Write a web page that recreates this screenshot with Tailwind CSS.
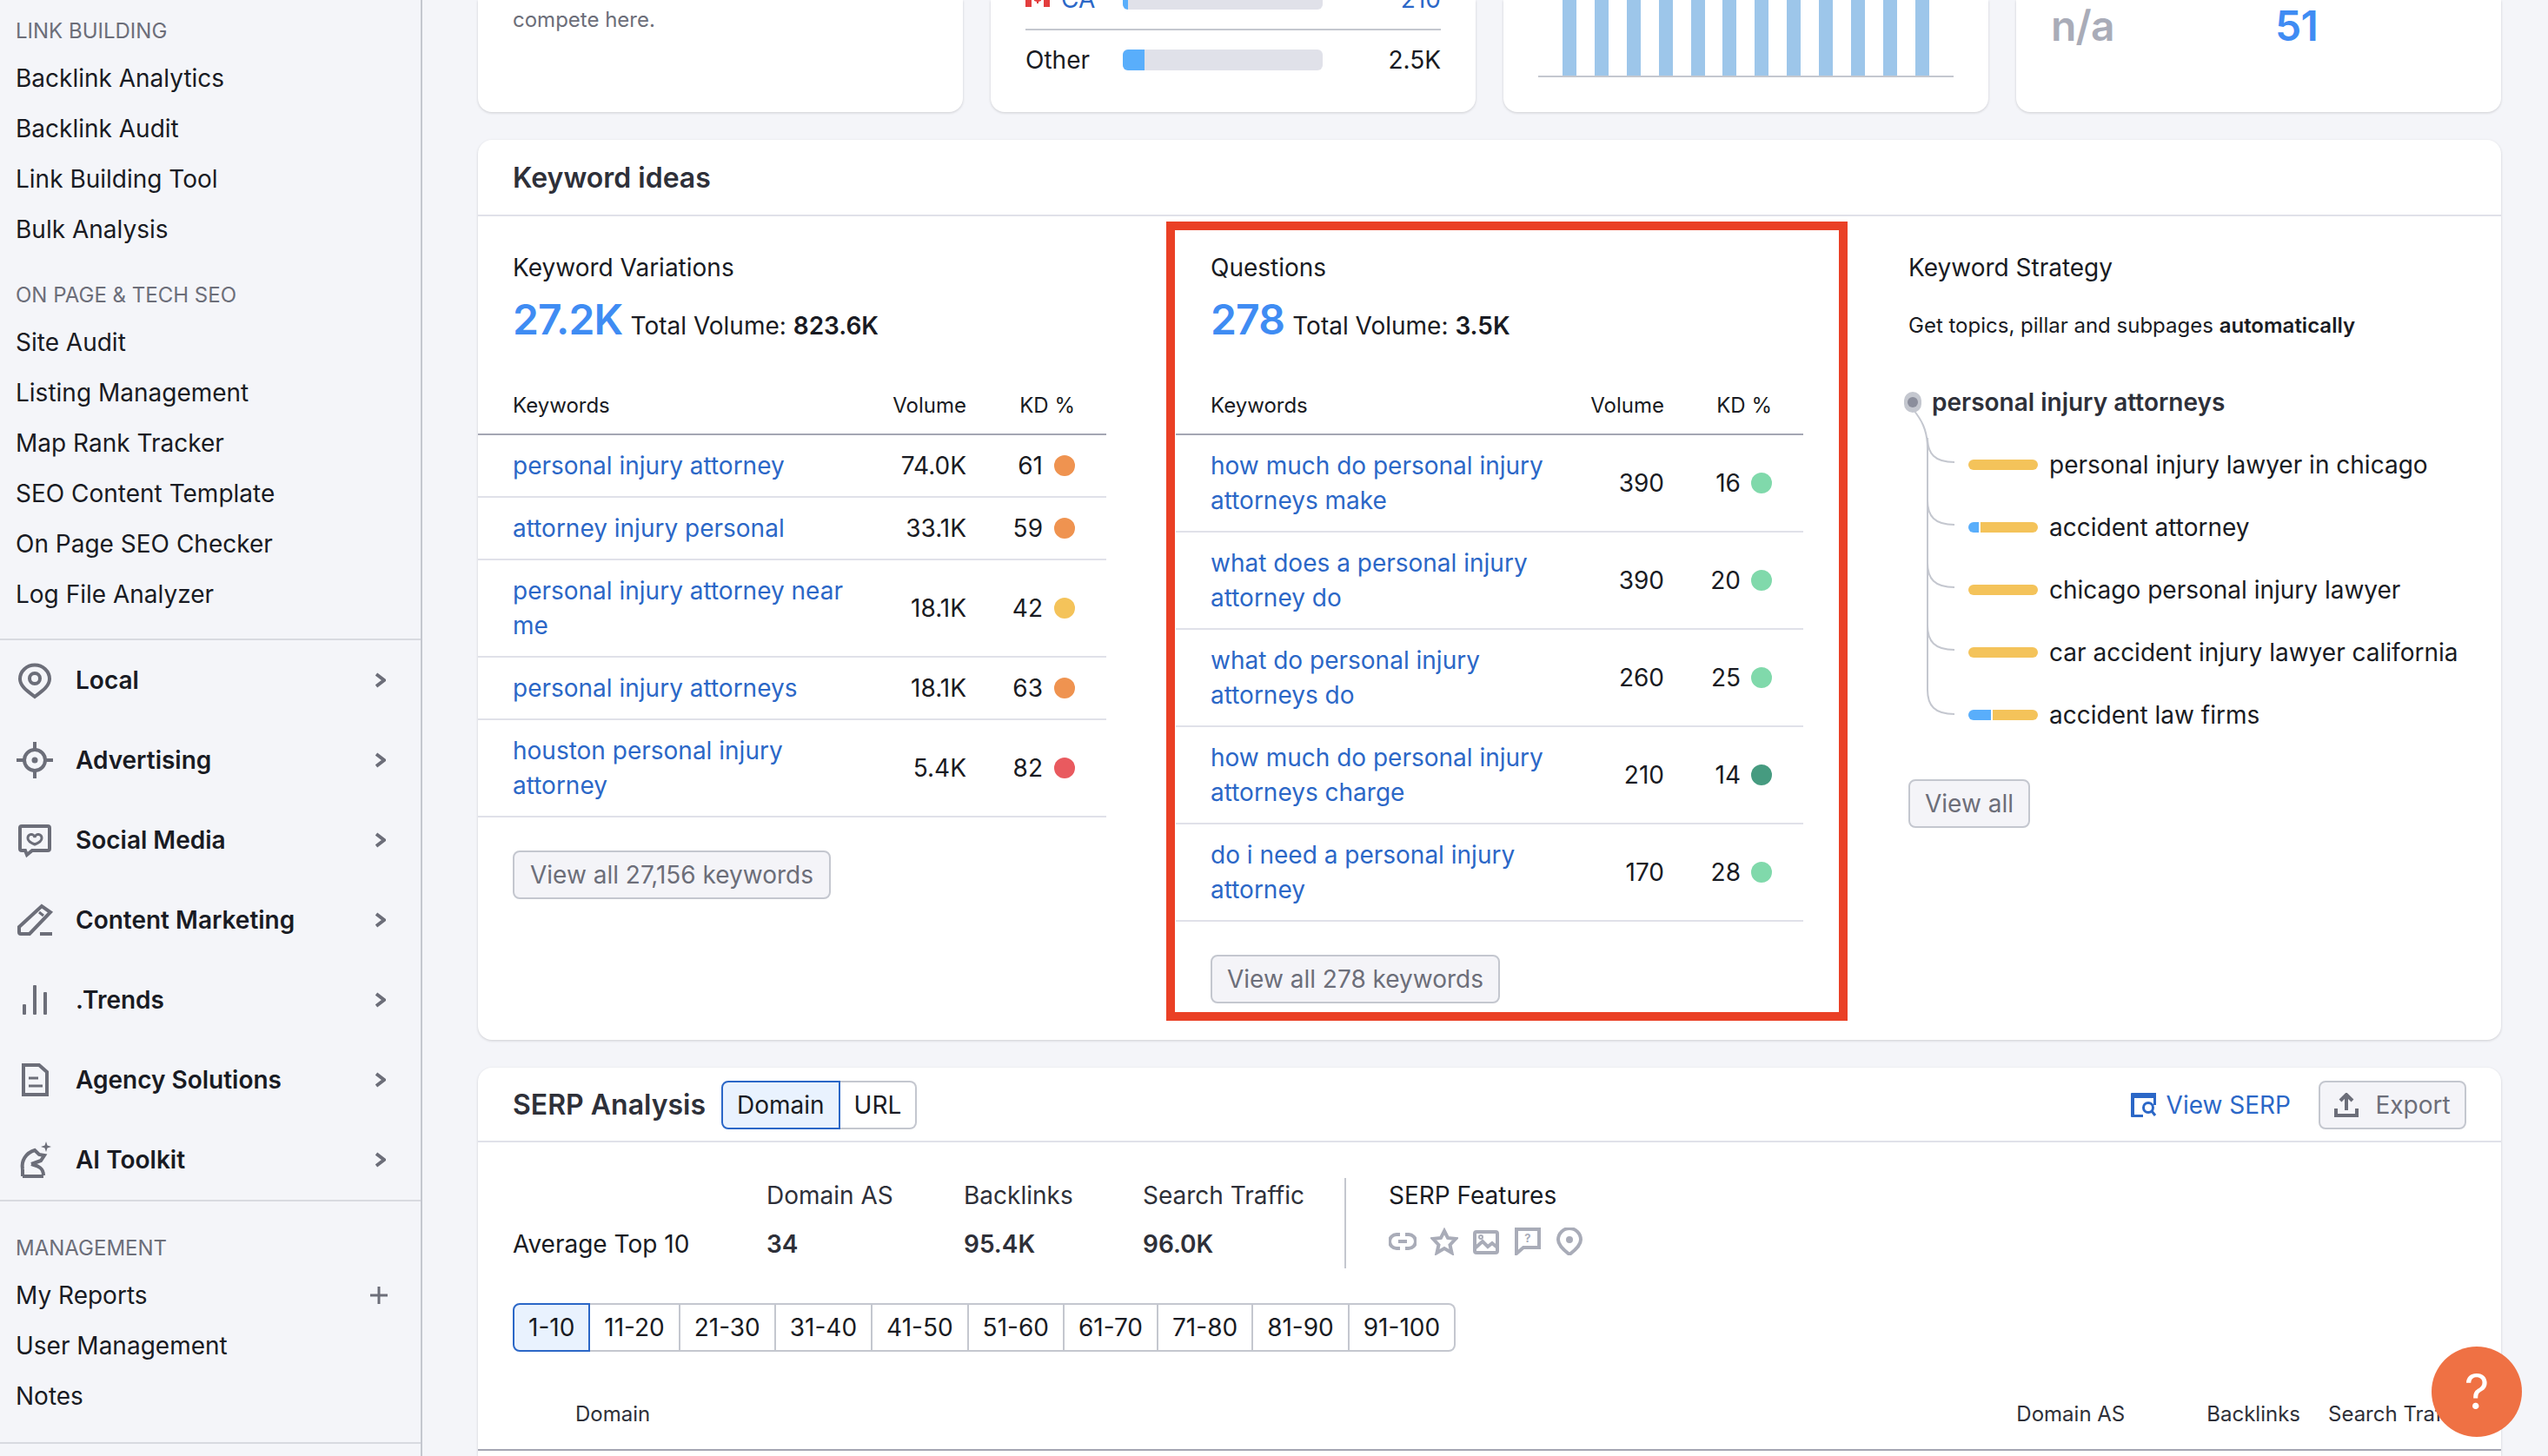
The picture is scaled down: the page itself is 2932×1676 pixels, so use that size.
<!DOCTYPE html>
<html lang="en">

<head>
  <meta charset="UTF-8" />
  <title>Keyword Overview</title>
  <script src="https://cdn.jsdelivr.net/npm/@tailwindcss/browser@4"></script>
</head>

<body class="w-[2932px] h-[1676px] overflow-hidden flex bg-[#f4f5f9] text-[#191b23] text-[28px] leading-10 font-[Inter,sans-serif]">

  <!-- Sidebar -->
  <aside class="w-[486px] h-full shrink-0 border-r-2 border-[#c4c7cf] pt-[11px]">
    <div class="h-[50px] flex items-center pl-[18px] text-[24px] text-[#6c6e79]">LINK BUILDING</div>
    <div class="h-[58px] flex items-center pl-[18px]">Backlink Analytics</div>
    <div class="h-[58px] flex items-center pl-[18px]">Backlink Audit</div>
    <div class="h-[58px] flex items-center pl-[18px]">Link Building Tool</div>
    <div class="h-[58px] flex items-center pl-[18px]">Bulk Analysis</div>
    <div class="h-[50px] mt-[22px] flex items-center pl-[18px] text-[24px] text-[#6c6e79]">ON PAGE &amp; TECH SEO</div>
    <div class="h-[58px] flex items-center pl-[18px]">Site Audit</div>
    <div class="h-[58px] flex items-center pl-[18px]">Listing Management</div>
    <div class="h-[58px] flex items-center pl-[18px]">Map Rank Tracker</div>
    <div class="h-[58px] flex items-center pl-[18px]">SEO Content Template</div>
    <div class="h-[58px] flex items-center pl-[18px]">On Page SEO Checker</div>
    <div class="h-[58px] flex items-center pl-[18px]">Log File Analyzer</div>

    <div class="mt-[22px] border-y-2 border-[#d8dae0]">
      <div class="h-[92px] flex items-center font-semibold">
        <svg class="w-11 h-11 ml-[18px] mr-[25px] shrink-0" viewBox="0 0 44 44" fill="none" stroke="#6c6e79" stroke-width="4"><path d="M22 41C14 35 5 29 5 20.500a17 16 0 0 1 34 0C39 29 30 35 22 41z" /><circle cx="22" cy="20" r="6" /></svg>
        <span class="flex-1">Local</span>
        <svg class="w-3 h-[18px] mr-[40px]" viewBox="0 0 12 18" fill="none" stroke="#6c6e79" stroke-width="4"><path d="M1 2l9 7-9 7" /></svg>
      </div>
      <div class="h-[92px] flex items-center font-semibold">
        <svg class="w-11 h-11 ml-[18px] mr-[25px] shrink-0" viewBox="0 0 44 44" fill="none" stroke="#6c6e79" stroke-width="4"><circle cx="22" cy="22" r="12" /><circle cx="22" cy="22" r="3.500" fill="#6c6e79" stroke="none" /><path d="M22 1v9M22 34v9M1 22h9M34 22h9" /></svg>
        <span class="flex-1">Advertising</span>
        <svg class="w-3 h-[18px] mr-[40px]" viewBox="0 0 12 18" fill="none" stroke="#6c6e79" stroke-width="4"><path d="M1 2l9 7-9 7" /></svg>
      </div>
      <div class="h-[92px] flex items-center font-semibold">
        <svg class="w-11 h-11 ml-[18px] mr-[25px] shrink-0" viewBox="0 0 44 44" fill="none" stroke="#6c6e79" stroke-width="4"><path d="M7 6h30a2 2 0 0 1 2 2v24a2 2 0 0 1-2 2H19l-6 5-2-5H7a2 2 0 0 1-2-2V8a2 2 0 0 1 2-2z" /><path d="M22 27c-5-2-8-4-8-7a4 4 0 0 1 8-1 4 4 0 0 1 8 1c0 3-3 5-8 7z" stroke-width="3" /></svg>
        <span class="flex-1">Social Media</span>
        <svg class="w-3 h-[18px] mr-[40px]" viewBox="0 0 12 18" fill="none" stroke="#6c6e79" stroke-width="4"><path d="M1 2l9 7-9 7" /></svg>
      </div>
      <div class="h-[92px] flex items-center font-semibold">
        <svg class="w-11 h-11 ml-[18px] mr-[25px] shrink-0" viewBox="0 0 44 44" fill="none" stroke="#6c6e79" stroke-width="4"><path d="M4 30L30 6l10 7-24 25H6a2 2 0 0 1-2-2z" /><path d="M27 13l5 4" stroke-width="3" /><path d="M28 38h14" /></svg>
        <span class="flex-1">Content Marketing</span>
        <svg class="w-3 h-[18px] mr-[40px]" viewBox="0 0 12 18" fill="none" stroke="#6c6e79" stroke-width="4"><path d="M1 2l9 7-9 7" /></svg>
      </div>
      <div class="h-[92px] flex items-center font-semibold">
        <svg class="w-11 h-11 ml-[18px] mr-[25px] shrink-0" viewBox="0 0 44 44" fill="#6c6e79"><rect x="8" y="27" width="4" height="12" rx="1" /><rect x="20" y="5" width="4" height="34" rx="1" /><rect x="32" y="13" width="4" height="26" rx="1" /></svg>
        <span class="flex-1">.Trends</span>
        <svg class="w-3 h-[18px] mr-[40px]" viewBox="0 0 12 18" fill="none" stroke="#6c6e79" stroke-width="4"><path d="M1 2l9 7-9 7" /></svg>
      </div>
      <div class="h-[92px] flex items-center font-semibold">
        <svg class="w-11 h-11 ml-[18px] mr-[25px] shrink-0" viewBox="0 0 44 44" fill="none" stroke="#6c6e79" stroke-width="4"><path d="M9 5h18l9 8v26H9z" /><path d="M15 20h11M15 29h16" stroke-width="3" /></svg>
        <span class="flex-1">Agency Solutions</span>
        <svg class="w-3 h-[18px] mr-[40px]" viewBox="0 0 12 18" fill="none" stroke="#6c6e79" stroke-width="4"><path d="M1 2l9 7-9 7" /></svg>
      </div>
      <div class="h-[92px] flex items-center font-semibold">
        <svg class="w-11 h-11 ml-[18px] mr-[25px] shrink-0" viewBox="0 0 44 44" fill="none" stroke="#6c6e79" stroke-width="4"><path d="M8 41h24" /><path d="M8 33c-2-10 4-19 14-22l5 5 6 1-4 6-11 4" /><path d="M18 27c6 2 14 3 14 13" /><path d="M8 33v8" /><path d="M35 1l1.500 4.500L41 7l-4.500 1.500L35 13l-1.500-4.500L29 7l4.500-1.500z" fill="#6c6e79" stroke="none" /></svg>
        <span class="flex-1">AI Toolkit</span>
        <svg class="w-3 h-[18px] mr-[40px]" viewBox="0 0 12 18" fill="none" stroke="#6c6e79" stroke-width="4"><path d="M1 2l9 7-9 7" /></svg>
      </div>
    </div>

    <div class="h-[50px] mt-[29px] flex items-center pl-[18px] text-[24px] text-[#6c6e79]">MANAGEMENT</div>
    <div class="h-[58px] flex items-center pl-[18px]">
      <span class="flex-1">My Reports</span>
      <svg class="w-5 h-5 mr-[38px]" viewBox="0 0 20 20" stroke="#6c6e79" stroke-width="3"><path d="M0 10h20M10 0v20" /></svg>
    </div>
    <div class="h-[58px] flex items-center pl-[18px]">User Management</div>
    <div class="h-[58px] flex items-center pl-[18px]">Notes</div>
    <div class="mt-[24px] border-t-2 border-[#d8dae0]"></div>
  </aside>

  <!-- Main -->
  <main class="w-[2446px] pl-[64px] pr-[54px]">

    <!-- Top cards, scrolled partly out of view -->
    <div class="grid grid-cols-4 gap-8 h-[129px]">
      <div class="bg-white rounded-b-2xl shadow-[0_1px_3px_rgba(25,27,35,0.18)] pl-[40px] pt-[7px] text-[24px] leading-8 text-[#6c6e79]">compete here.</div>

      <div class="bg-white rounded-b-2xl shadow-[0_1px_3px_rgba(25,27,35,0.18)] overflow-hidden">
        <div class="-mt-[35px] mx-[40px]">
          <div class="flex items-center py-[14px] border-b-2 border-[#c4c7cf] text-[#2b67c7]">
            <div class="w-[112px] flex items-center gap-[13px]">
              <svg class="w-7 h-[18px] shrink-0" viewBox="0 0 28 18"><rect width="28" height="18" fill="#fff" /><rect width="7" height="18" fill="#e33e3e" /><rect x="21" width="7" height="18" fill="#e33e3e" /><path d="M14 4l3 5 1-1v3l-3 1v2h-2v-2l-3-1V8l1 1z" fill="#e33e3e" /></svg>
              <span>CA</span>
            </div>
            <div class="w-[230px] h-6 bg-[#e0e1e9] rounded-md overflow-hidden"><div class="w-[6px] h-full bg-[#59aefb]"></div></div>
            <div class="flex-1 text-right">210</div>
          </div>
          <div class="flex items-center py-[14px]">
            <div class="w-[112px]">Other</div>
            <div class="w-[230px] h-6 bg-[#e0e1e9] rounded-md overflow-hidden"><div class="w-[25px] h-full bg-[#59aefb]"></div></div>
            <div class="flex-1 text-right">2.5K</div>
          </div>
        </div>
      </div>

      <div class="bg-white rounded-b-2xl shadow-[0_1px_3px_rgba(25,27,35,0.18)] pl-[40px]">
        <div class="w-[478px] h-[89px] pl-[28px] border-b-2 border-[#c4c7cf] flex gap-[20.900px]">
          <div class="w-4 bg-[#9dc6ea]"></div><div class="w-4 bg-[#9dc6ea]"></div><div class="w-4 bg-[#9dc6ea]"></div><div class="w-4 bg-[#9dc6ea]"></div>
          <div class="w-4 bg-[#9dc6ea]"></div><div class="w-4 bg-[#9dc6ea]"></div><div class="w-4 bg-[#9dc6ea]"></div><div class="w-4 bg-[#9dc6ea]"></div>
          <div class="w-4 bg-[#9dc6ea]"></div><div class="w-4 bg-[#9dc6ea]"></div><div class="w-4 bg-[#9dc6ea]"></div><div class="w-4 bg-[#9dc6ea]"></div>
        </div>
      </div>

      <div class="bg-white rounded-b-2xl shadow-[0_1px_3px_rgba(25,27,35,0.18)] pl-[40px] pt-[2px] flex text-[48px] leading-[56px] font-semibold tracking-[-0.8px]">
        <div class="w-[258px] text-[#a9acb8]">n/a</div>
        <div class="text-[#3f8cf3]">51</div>
      </div>
    </div>

    <!-- Keyword ideas -->
    <section class="mt-8 h-[1036px] bg-white rounded-2xl shadow-[0_1px_3px_rgba(25,27,35,0.18)]">
      <div class="h-[88px] pl-[40px] pt-[1px] flex items-center border-b-2 border-[#e0e1e9] text-[32px] font-semibold text-[#2e3039]">Keyword ideas</div>

      <div class="flex items-start">

        <!-- Variations -->
        <div class="w-[723px] pt-[39px]">
          <div class="pl-[40px]">
            <div>Keyword Variations</div>
            <div class="mt-3 flex items-baseline gap-[9px]">
              <span class="text-[48px] leading-[56px] font-semibold tracking-[-0.8px] text-[#3f8cf3]">27.2K</span>
              <span>Total Volume: <b class="font-semibold">823.6K</b></span>
            </div>
          </div>
          <div class="mt-[55px] pl-[40px] pr-[36px] pb-[16px] flex text-[24px] leading-8 border-b-2 border-[#a4a6b3]">
            <div class="w-[411px]">Keywords</div>
            <div class="w-[111px] text-right">Volume</div>
            <div class="w-[125px] text-right">KD %</div>
          </div>
          <div class="flex items-center py-[15px] pl-[40px] pr-[36px] border-b-2 border-[#e0e1e9]">
            <div class="w-[411px] text-[#2b67c7]">personal injury attorney</div>
            <div class="w-[111px] text-right">74.0K</div>
            <div class="w-[125px] flex justify-end items-center gap-[13px]">61<span class="w-6 h-6 rounded-full bg-[#ef9350]"></span></div>
          </div>
          <div class="flex items-center py-[15px] pl-[40px] pr-[36px] border-b-2 border-[#e0e1e9]">
            <div class="w-[411px] text-[#2b67c7]">attorney injury personal</div>
            <div class="w-[111px] text-right">33.1K</div>
            <div class="w-[125px] flex justify-end items-center gap-[13px]">59<span class="w-6 h-6 rounded-full bg-[#ef9350]"></span></div>
          </div>
          <div class="flex items-center py-[15px] pl-[40px] pr-[36px] border-b-2 border-[#e0e1e9]">
            <div class="w-[411px] text-[#2b67c7]">personal injury attorney near me</div>
            <div class="w-[111px] text-right">18.1K</div>
            <div class="w-[125px] flex justify-end items-center gap-[13px]">42<span class="w-6 h-6 rounded-full bg-[#f4c35a]"></span></div>
          </div>
          <div class="flex items-center py-[15px] pl-[40px] pr-[36px] border-b-2 border-[#e0e1e9]">
            <div class="w-[411px] text-[#2b67c7]">personal injury attorneys</div>
            <div class="w-[111px] text-right">18.1K</div>
            <div class="w-[125px] flex justify-end items-center gap-[13px]">63<span class="w-6 h-6 rounded-full bg-[#ef9350]"></span></div>
          </div>
          <div class="flex items-center py-[15px] pl-[40px] pr-[36px] border-b-2 border-[#e0e1e9]">
            <div class="w-[411px] text-[#2b67c7]">houston personal injury attorney</div>
            <div class="w-[111px] text-right">5.4K</div>
            <div class="w-[125px] flex justify-end items-center gap-[13px]">82<span class="w-6 h-6 rounded-full bg-[#e95a5f]"></span></div>
          </div>
          <button class="mt-[38px] ml-[40px] h-14 px-[18px] rounded-lg border-2 border-[#c4c7cf] bg-[#f4f4f8] text-[#6c6e79]">View all 27,156 keywords</button>
        </div>

        <!-- Questions, with the red highlight frame -->
        <div class="w-[784px] h-[920px] ml-[69px] mt-[6px] border-[10px] border-[#ea4025] pt-[23px] pl-px">
          <div class="pl-[40px]">
            <div>Questions</div>
            <div class="mt-3 flex items-baseline gap-[9px]">
              <span class="text-[48px] leading-[56px] font-semibold tracking-[-0.8px] text-[#3f8cf3]">278</span>
              <span>Total Volume: <b class="font-semibold">3.5K</b></span>
            </div>
          </div>
          <div class="w-[722px]">
            <div class="mt-[55px] pl-[40px] pr-[36px] pb-[16px] flex text-[24px] leading-8 border-b-2 border-[#a4a6b3]">
              <div class="w-[410px]">Keywords</div>
              <div class="w-[112px] text-right">Volume</div>
              <div class="w-[124px] text-right">KD %</div>
            </div>
            <div class="flex items-center py-[15px] pl-[40px] pr-[36px] border-b-2 border-[#e0e1e9]">
              <div class="w-[410px] text-[#2b67c7]">how much do personal injury attorneys make</div>
              <div class="w-[112px] text-right">390</div>
              <div class="w-[124px] flex justify-end items-center gap-3">16<span class="w-6 h-6 rounded-full bg-[#80d9ab]"></span></div>
            </div>
            <div class="flex items-center py-[15px] pl-[40px] pr-[36px] border-b-2 border-[#e0e1e9]">
              <div class="w-[410px] text-[#2b67c7]">what does a personal injury attorney do</div>
              <div class="w-[112px] text-right">390</div>
              <div class="w-[124px] flex justify-end items-center gap-3">20<span class="w-6 h-6 rounded-full bg-[#80d9ab]"></span></div>
            </div>
            <div class="flex items-center py-[15px] pl-[40px] pr-[36px] border-b-2 border-[#e0e1e9]">
              <div class="w-[410px] text-[#2b67c7]">what do personal injury attorneys do</div>
              <div class="w-[112px] text-right">260</div>
              <div class="w-[124px] flex justify-end items-center gap-3">25<span class="w-6 h-6 rounded-full bg-[#80d9ab]"></span></div>
            </div>
            <div class="flex items-center py-[15px] pl-[40px] pr-[36px] border-b-2 border-[#e0e1e9]">
              <div class="w-[410px] text-[#2b67c7]">how much do personal injury attorneys charge</div>
              <div class="w-[112px] text-right">210</div>
              <div class="w-[124px] flex justify-end items-center gap-3">14<span class="w-6 h-6 rounded-full bg-[#469b80]"></span></div>
            </div>
            <div class="flex items-center py-[15px] pl-[40px] pr-[36px] border-b-2 border-[#e0e1e9]">
              <div class="w-[410px] text-[#2b67c7]">do i need a personal injury attorney</div>
              <div class="w-[112px] text-right">170</div>
              <div class="w-[124px] flex justify-end items-center gap-3">28<span class="w-6 h-6 rounded-full bg-[#80d9ab]"></span></div>
            </div>
            <button class="mt-[38px] ml-[40px] h-14 px-[17px] rounded-lg border-2 border-[#c4c7cf] bg-[#f4f4f8] text-[#6c6e79]">View all 278 keywords</button>
          </div>
        </div>

        <!-- Strategy -->
        <div class="ml-[70px] pt-[39px]">
          <div>Keyword Strategy</div>
          <div class="mt-[31px] text-[24px] leading-8">Get topics, pillar and subpages <b class="font-semibold">automatically</b></div>
          <div class="relative mt-[52px]">
            <svg class="absolute top-0 left-0 w-[70px] h-[400px]" viewBox="0 0 70 400" fill="none" stroke="#c4c7cf" stroke-width="2">
              <path d="M6 29C14 39 22 51 22 73V351" />
              <path d="M22 61C22 79 30 89 53 89" />
              <path d="M22 133C22 151 30 161 53 161" />
              <path d="M22 205C22 223 30 233 53 233" />
              <path d="M22 277C22 295 30 305 53 305" />
              <path d="M22 351C22 369 30 379 53 379" />
            </svg>
            <div class="flex items-center gap-3 -ml-[5px] font-semibold text-[#2e3039]">
              <span class="w-5 h-6 rounded-full bg-[#c4c7cf] flex items-center justify-center"><span class="w-3 h-3 rounded-full bg-[#8b8e9c]"></span></span>
              personal injury attorneys
            </div>
            <div class="mt-8 flex flex-col gap-8 pl-[69px]">
              <div class="flex items-center gap-[13px]"><span class="w-20 h-3 rounded-md bg-[#f4c35a]"></span>personal injury lawyer in chicago</div>
              <div class="flex items-center gap-[13px]"><span class="w-20 h-3 rounded-md overflow-hidden flex gap-[2px]"><span class="w-3 bg-[#59aefb]"></span><span class="flex-1 bg-[#f4c35a]"></span></span>accident attorney</div>
              <div class="flex items-center gap-[13px]"><span class="w-20 h-3 rounded-md bg-[#f4c35a]"></span>chicago personal injury lawyer</div>
              <div class="flex items-center gap-[13px]"><span class="w-20 h-3 rounded-md bg-[#f4c35a]"></span>car accident injury lawyer california</div>
              <div class="flex items-center gap-[13px]"><span class="w-20 h-3 rounded-md overflow-hidden flex gap-[2px]"><span class="w-[26px] bg-[#59aefb]"></span><span class="flex-1 bg-[#f4c35a]"></span></span>accident law firms</div>
            </div>
          </div>
          <button class="mt-[54px] h-14 px-[17px] rounded-lg border-2 border-[#c4c7cf] bg-[#f4f4f8] text-[#6c6e79]">View all</button>
        </div>
      </div>
    </section>

    <!-- SERP Analysis -->
    <section class="mt-8 h-[447px] bg-white rounded-t-2xl shadow-[0_1px_3px_rgba(25,27,35,0.18)] overflow-hidden">
      <div class="h-[86px] pt-[2px] pl-[40px] pr-[40px] flex items-center border-b-2 border-[#e0e1e9]">
        <span class="text-[32px] font-semibold text-[#2e3039]">SERP Analysis</span>
        <div class="ml-[18px] flex h-14">
          <span class="px-4 flex items-center rounded-l-lg border-2 border-[#2b67c7] bg-[#e9f2fe]">Domain</span>
          <span class="px-4 flex items-center rounded-r-lg border-y-2 border-r-2 border-[#c4c7cf]">URL</span>
        </div>
        <span class="ml-auto flex items-center gap-[11px] text-[#2b67c7]">
          <svg class="w-[30px] h-[28px]" viewBox="0 0 30 28"><path d="M1 0h28v14h-3V6H4v19h10v3H1a1 1 0 0 1-1-1V1a1 1 0 0 1 1-1z" fill="#2b67c7" /><circle cx="20" cy="17" r="5.500" fill="none" stroke="#2b67c7" stroke-width="3" /><path d="M24 21l4 5" stroke="#2b67c7" stroke-width="3" /></svg>
          View SERP
        </span>
        <button class="ml-8 h-14 w-[170px] flex items-center justify-center gap-[19px] rounded-lg border-2 border-[#c4c7cf] bg-[#f4f4f8] text-[#6c6e79]">
          <svg class="w-7 h-7" viewBox="0 0 28 28" fill="none" stroke="#6c6e79" stroke-width="4"><path d="M14 20V3M7 9l7-7 7 7" /><path d="M2 18v8h24v-8" /></svg>
          Export
        </button>
      </div>

      <div class="mt-[41px] ml-[40px] flex">
        <div class="w-[292px] pt-[56px]">Average Top 10</div>
        <div class="w-[227px]"><div class="text-[#2e3039]">Domain AS</div><div class="mt-4 font-semibold text-[#2e3039]">34</div></div>
        <div class="w-[206px]"><div class="text-[#2e3039]">Backlinks</div><div class="mt-4 font-semibold text-[#2e3039]">95.4K</div></div>
        <div class="w-[234px] h-[104px] border-r-2 border-[#c4c7cf]"><div class="text-[#2e3039]">Search Traffic</div><div class="mt-4 font-semibold text-[#2e3039]">96.0K</div></div>
        <div class="pl-[49px]">
          <div>SERP Features</div>
          <div class="mt-[17px] flex gap-4">
            <svg class="w-8 h-8" viewBox="0 0 32 32" fill="none" stroke="#a9acb8" stroke-width="4"><path d="M13 8H9a8 8 0 0 0 0 16h4M19 8h4a8 8 0 0 1 0 16h-4M11 16h10" /></svg>
            <svg class="w-8 h-8" viewBox="0 0 32 32" fill="none" stroke="#a9acb8" stroke-width="4"><path d="M16 4l4 8 9 1-6.500 7 2 9-8.500-5-8.500 5 2-9L3 13l9-1z" /></svg>
            <svg class="w-8 h-8" viewBox="0 0 32 32" fill="none" stroke="#a9acb8" stroke-width="4"><rect x="3" y="5" width="26" height="24" rx="2" /><path d="M3 24l9-8 6 6 5-4 6 5" /><circle cx="10" cy="11" r="1" /></svg>
            <svg class="w-8 h-8" viewBox="0 0 32 32" fill="none" stroke="#a9acb8" stroke-width="4"><path d="M3 2h26v21H11l-8 7z" /><text x="16" y="17" text-anchor="middle" font-size="13" font-weight="700" font-family="Inter" fill="#a9acb8" stroke="none">?</text></svg>
            <svg class="w-8 h-8" viewBox="0 0 32 32" fill="none" stroke="#a9acb8" stroke-width="4"><path d="M16 31C8 25 3 20 3 14a13 13 0 0 1 26 0C29 20 24 25 16 31z" /><circle cx="16" cy="14" r="4" fill="#a9acb8" stroke="none" /></svg>
          </div>
        </div>
      </div>

      <div class="mt-10 ml-[40px] flex h-14">
        <span class="px-4 flex items-center rounded-l-lg border-2 border-[#2b67c7] bg-[#e9f2fe]">1-10</span>
        <span class="px-4 flex items-center border-y-2 border-r-2 border-[#c4c7cf]">11-20</span>
        <span class="px-4 flex items-center border-y-2 border-r-2 border-[#c4c7cf]">21-30</span>
        <span class="px-4 flex items-center border-y-2 border-r-2 border-[#c4c7cf]">31-40</span>
        <span class="px-4 flex items-center border-y-2 border-r-2 border-[#c4c7cf]">41-50</span>
        <span class="px-4 flex items-center border-y-2 border-r-2 border-[#c4c7cf]">51-60</span>
        <span class="px-4 flex items-center border-y-2 border-r-2 border-[#c4c7cf]">61-70</span>
        <span class="px-4 flex items-center border-y-2 border-r-2 border-[#c4c7cf]">71-80</span>
        <span class="px-4 flex items-center border-y-2 border-r-2 border-[#c4c7cf]">81-90</span>
        <span class="px-4 flex items-center rounded-r-lg border-y-2 border-r-2 border-[#c4c7cf]">91-100</span>
      </div>

      <div class="mt-14 pl-[112px] pb-[24px] flex text-[24px] leading-8 text-[#2e3039] border-b-2 border-[#a4a6b3]">
        <div class="flex-1">Domain</div>
        <div>Domain AS</div>
        <div class="ml-[94px]">Backlinks</div>
        <div class="ml-[32px] w-[199px] whitespace-nowrap">Search Traffic</div>
      </div>
    </section>
  </main>

  <!-- Help bubble -->
  <div class="absolute right-[30px] bottom-[22px] w-[104px] h-[104px] rounded-full bg-[#ef7144] flex items-center justify-center text-white text-[56px]">?</div>
</body>

</html>
